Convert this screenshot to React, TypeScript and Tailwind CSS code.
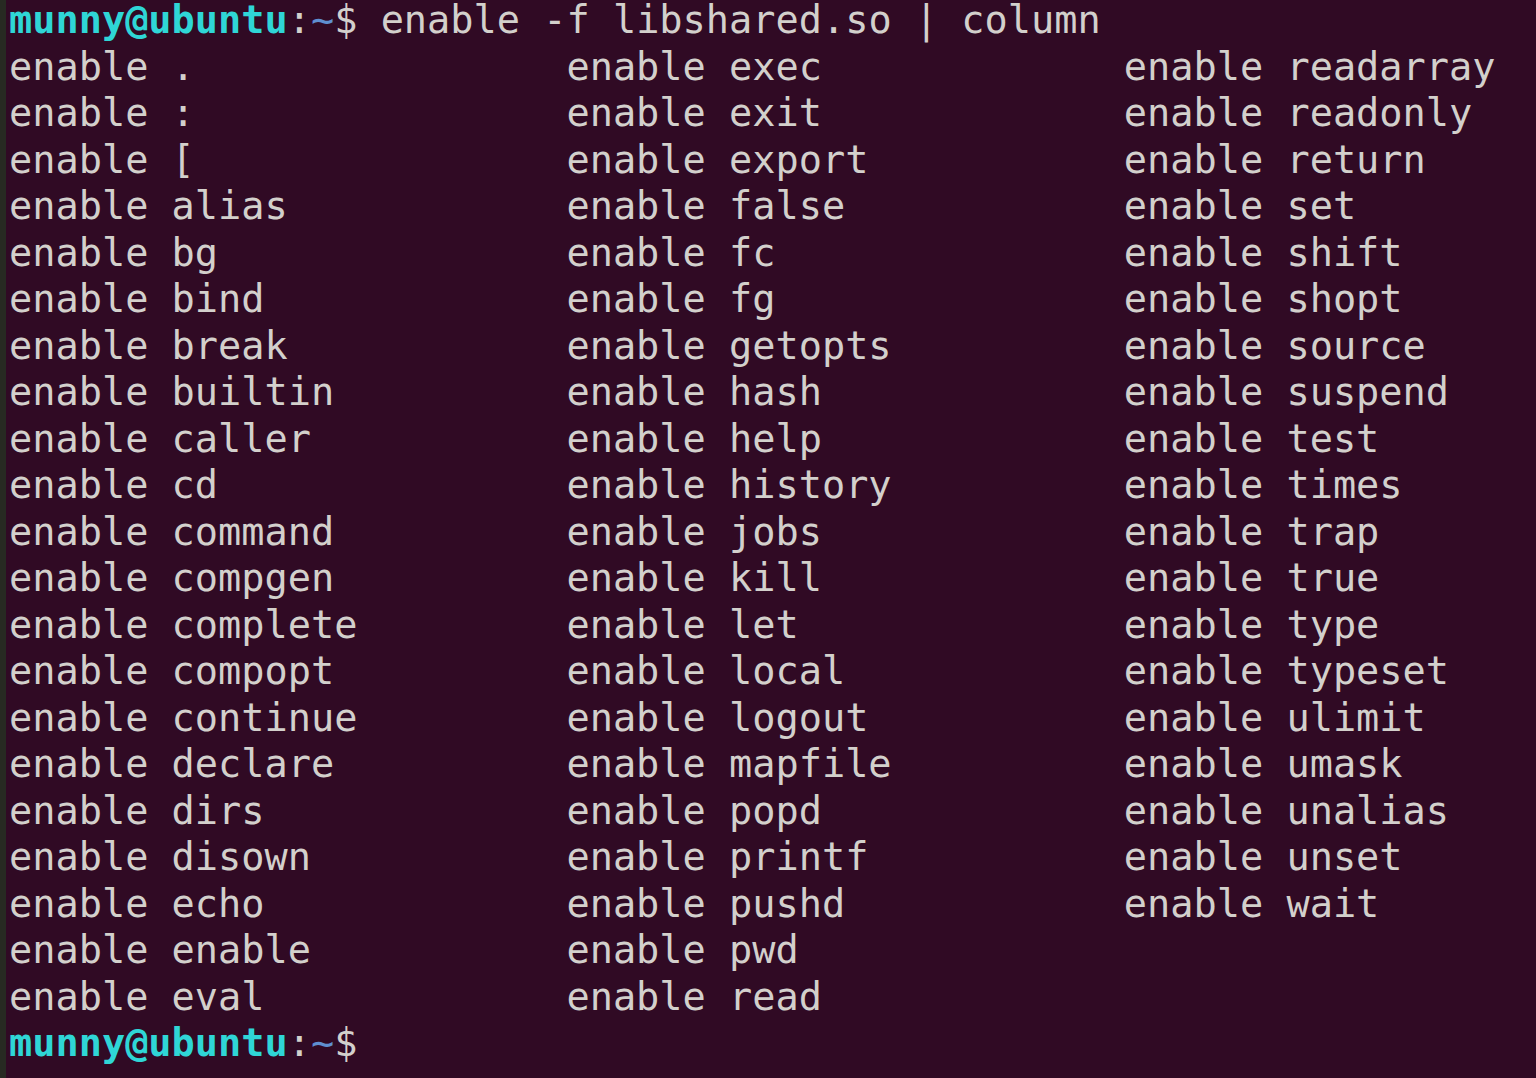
const col1 = ['.', ':', '[', 'alias', 'bg', 'bind', 'break', 'builtin', 'caller', 'cd', 'command', 'compgen', 'complete', 'compopt', 'continue', 'declare', 'dirs', 'disown', 'echo', 'enable', 'eval']
const col2 = ['exec', 'exit', 'export', 'false', 'fc', 'fg', 'getopts', 'hash', 'help', 'history', 'jobs', 'kill', 'let', 'local', 'logout', 'mapfile', 'popd', 'printf', 'pushd', 'pwd', 'read']
const col3 = ['readarray', 'readonly', 'return', 'set', 'shift', 'shopt', 'source', 'suspend', 'test', 'times', 'trap', 'true', 'type', 'typeset', 'ulimit', 'umask', 'unalias', 'unset', 'wait']

function Prompt({ cmd, first }: { cmd?: string; first?: boolean }) {
  return (
    <div className={first ? 'h-[43.5px] leading-[40px]' : ''}>
      <span className="font-bold text-[#2fd6d6]">munny@ubuntu</span>
      <span>:</span>
      <span className="text-[#5f8fd0]">~</span>
      <span>$ {cmd}</span>
    </div>
  )
}

export default function App() {
  const rows = col1.map((c, i) => {
    const a = ('enable ' + c).padEnd(24, ' ')
    const b = col2[i] ? ('enable ' + col2[i]).padEnd(24, ' ') : ''.padEnd(24, ' ')
    const d = col3[i] ? 'enable ' + col3[i] : ''
    return a + b + d
  })

  return (
    <div className="flex h-[1078px] w-[1536px] overflow-hidden bg-[#300a24]">
      {/* bord gauche de la fenêtre */}
      <div className="w-[6px] shrink-0 bg-[#272a22]" />
      <div
        className="pl-[3px] whitespace-pre text-[38.6px] leading-[46.5px] text-[#d3d0cc]"
        style={{ fontFamily: '"DejaVu Sans Mono", monospace' }}
      >
        <Prompt first cmd="enable -f libshared.so | column" />
        {rows.map((r, i) => (
          <div key={i}>{r}</div>
        ))}
        <Prompt />
      </div>
    </div>
  )
}
